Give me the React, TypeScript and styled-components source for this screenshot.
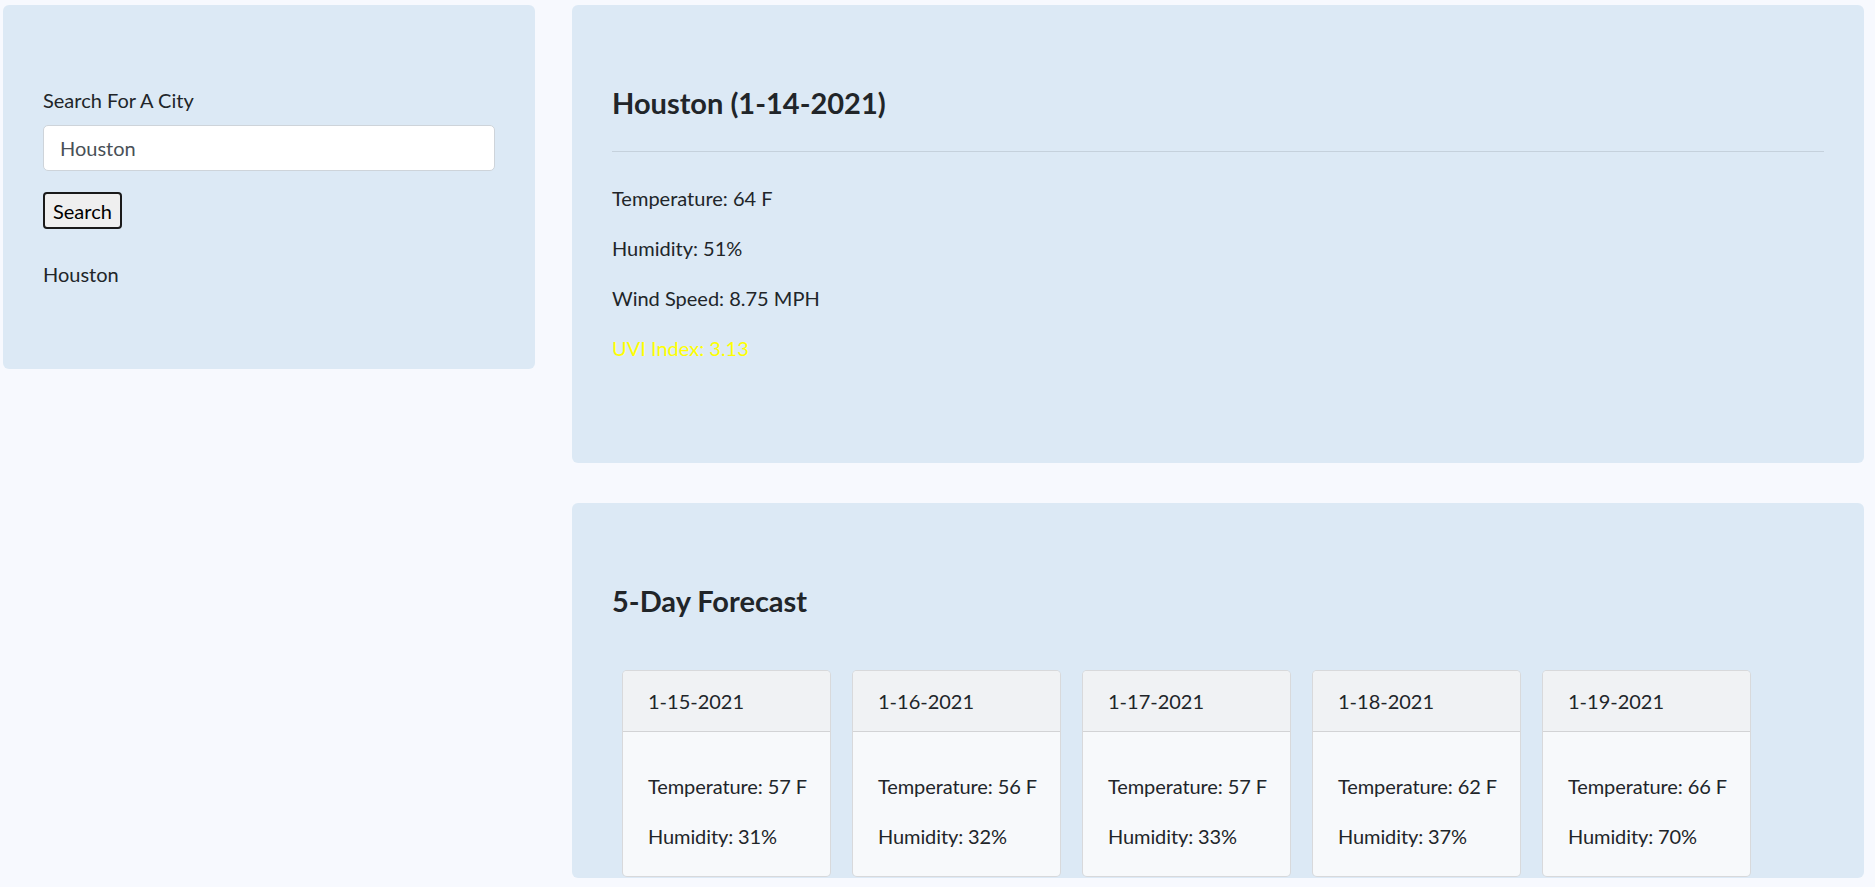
import React from "react";
import styled, { createGlobalStyle } from "styled-components";

const GlobalStyle = createGlobalStyle`
  html, body {
    margin: 0;
    padding: 0;
    background: #f7f9fe;
  }
  body {
    font-family: Lato, "Segoe UI", "Liberation Sans", sans-serif;
    font-size: 20px;
    line-height: 1.5;
    color: #212529;
  }
  * { box-sizing: border-box; }
`;

const Page = styled.div`
  display: grid;
  grid-template-columns: 532px 1292px;
  column-gap: 37px;
  align-items: start;
  padding: 5px 11px 0 3px;
`;

const Panel = styled.section<{ $flushBottom?: boolean }>`
  background: #dce9f5;
  border-radius: 6px;
  padding: ${(p) => (p.$flushBottom ? "80px 40px 1px" : "80px 40px")};
`;

const Column = styled.div`
  display: flex;
  flex-direction: column;
  gap: 40px;
`;

const Label = styled.label`
  display: block;
  line-height: 30px;
  margin-bottom: 10px;
`;

const Input = styled.input`
  display: block;
  width: 100%;
  height: 46px;
  padding: 0 16px;
  border: 1px solid #ced4da;
  border-radius: 5px;
  background: #fff;
  font: inherit;
  color: #495057;
  outline: none;
`;

const Button = styled.button`
  display: block;
  margin-top: 21px;
  height: 37px;
  padding: 0 8px;
  border: 2px solid #1a1a1a;
  border-radius: 4px;
  background: #efefef;
  font: inherit;
  line-height: 1;
  color: #000;
`;

const CityList = styled.ul`
  list-style: none;
  margin: 30px 0 0;
  padding: 0;
`;

const CityItem = styled.li`
  line-height: 30px;
`;

const Heading = styled.h4`
  margin: 0 0 10px;
  font-size: 29px;
  font-weight: 700;
  line-height: 36px;
`;

const Rule = styled.hr`
  margin: 30px 0 20px;
  border: 0;
  border-top: 1px solid rgba(0, 0, 0, 0.1);
`;

const Stats = styled.div`
  padding-top: 11px;
`;

const Stat = styled.p<{ $color?: string }>`
  margin: 0 0 20px;
  line-height: 30px;
  color: ${(p) => p.$color || "inherit"};
`;

const CardRow = styled.div`
  display: flex;
  gap: 21px;
  margin: 51px 0 0 10px;
`;

const Card = styled.div`
  width: 209px;
  flex: none;
  background: #f7f9fb;
  border: 1px solid rgba(0, 0, 0, 0.125);
  border-radius: 5px;
  overflow: hidden;
`;

const CardHeader = styled.div`
  height: 61px;
  padding: 0 25px;
  display: flex;
  align-items: center;
  background: #f0f2f4;
  border-bottom: 1px solid rgba(0, 0, 0, 0.125);
`;

const CardBody = styled.div`
  padding: 39px 0 25px 25px;
`;

const CardLine = styled.p<{ $last?: boolean }>`
  margin: 0 0 ${(p) => (p.$last ? "0" : "20px")};
  line-height: 30px;
  white-space: nowrap;
  letter-spacing: -0.1px;
`;

const forecast = [
  { date: "1-15-2021", temp: 57, hum: 31 },
  { date: "1-16-2021", temp: 56, hum: 32 },
  { date: "1-17-2021", temp: 57, hum: 33 },
  { date: "1-18-2021", temp: 62, hum: 37 },
  { date: "1-19-2021", temp: 66, hum: 70 },
];

export default function App() {
  return (
    <>
      <GlobalStyle />
      <Page>
        <Panel>
          <Label htmlFor="city">Search For A City</Label>
          <Input id="city" defaultValue="Houston" />
          <Button>Search</Button>
          <CityList>
            <CityItem>Houston</CityItem>
          </CityList>
        </Panel>
        <Column>
          <Panel>
            <Heading>Houston (1-14-2021)</Heading>
            <Rule />
            <Stats>
              <Stat>Temperature: 64 F</Stat>
              <Stat>Humidity: 51%</Stat>
              <Stat>Wind Speed: 8.75 MPH</Stat>
              <Stat $color="#ffff00">UVI Index: 3.13</Stat>
            </Stats>
          </Panel>
          <Panel $flushBottom>
            <Heading>5-Day Forecast</Heading>
            <CardRow>
              {forecast.map((d) => (
                <Card key={d.date}>
                  <CardHeader>{d.date}</CardHeader>
                  <CardBody>
                    <CardLine>Temperature: {d.temp} F</CardLine>
                    <CardLine $last>Humidity: {d.hum}%</CardLine>
                  </CardBody>
                </Card>
              ))}
            </CardRow>
          </Panel>
        </Column>
      </Page>
    </>
  );
}
